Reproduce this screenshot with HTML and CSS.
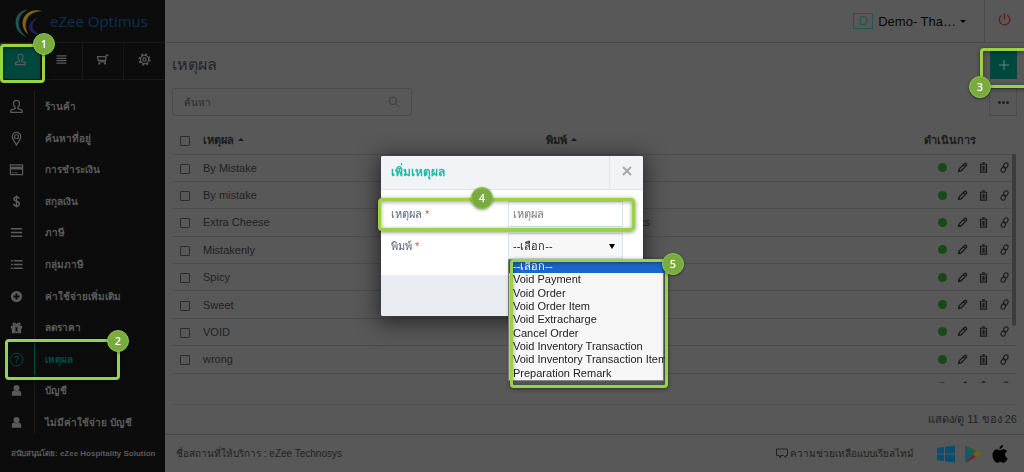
FILE: index.html
```html
<!DOCTYPE html>
<html lang="th">
<head>
    <meta charset="UTF-8">
    <meta name="viewport" content="width=device-width, initial-scale=1.0">
    <title>eZee Optimus - เหตุผล</title>
    <link rel="stylesheet" href="styles.css">
</head>
<body>
    <svg class="sprite" aria-hidden="true">
        <symbol id="i-person" viewBox="0 0 16 16"><path d="M8 1.500C5.800 1.500 4.800 3 4.800 5c0 1.600.7 3 1.700 3.700v1.500L2 12v2.300h12V12l-4.500-1.800V8.700c1-.7 1.700-2.100 1.700-3.700 0-2-1-3.500-3.200-3.500z" fill="none" stroke="currentColor" stroke-width="1.400"/></symbol>
        <symbol id="i-pin" viewBox="0 0 16 16"><path d="M8 15C6 11.500 3.500 9 3.500 6a4.500 4.500 0 0 1 9 0c0 3-2.500 5.500-4.500 9z" fill="none" stroke="currentColor" stroke-width="1.400"/><rect x="6" y="4" width="4" height="4" rx="1" fill="none" stroke="currentColor" stroke-width="1.300"/></symbol>
        <symbol id="i-card" viewBox="0 0 16 16"><path d="M1.500 3h13v10.500h-13z" fill="none" stroke="currentColor" stroke-width="1.300"/><path d="M1.500 5h13v3h-13z" fill="currentColor"/><path d="M3 11.500h2M6 11.500h3" stroke="currentColor"/></symbol>
        <symbol id="i-dollar" viewBox="0 0 16 16"><path d="M10.800 5C10.500 3.800 9.500 3.200 8 3.200S5.300 4 5.300 5.400C5.300 8.500 11 7 11 10.300c0 1.500-1.200 2.500-3 2.500s-2.900-.8-3.100-2.200M8 1.500v13" fill="none" stroke="currentColor" stroke-width="1.600"/></symbol>
        <symbol id="i-lines" viewBox="0 0 16 16"><path d="M2 4h12M2 8h12M2 12h12" stroke="currentColor" stroke-width="1.500"/></symbol>
        <symbol id="i-menu" viewBox="0 0 16 16"><path d="M2 3.500h12M2 6.500h12M2 9.500h12M2 12.500h12" stroke="currentColor" stroke-width="1.500"/></symbol>
        <symbol id="i-list" viewBox="0 0 16 16"><path d="M2 4h2M5 4h9.500M2 8h2M5 8h9.500M2 12h2M5 12h9.500" stroke="currentColor" stroke-width="1.500"/></symbol>
        <symbol id="i-plus-circle" viewBox="0 0 16 16"><circle cx="8" cy="8" r="6" fill="currentColor"/><path d="M8 4.800v6.400M4.800 8h6.400" stroke="#0c0c0c" stroke-width="2"/></symbol>
        <symbol id="i-gift" viewBox="0 0 16 16"><path d="M2 6h5v3H2zM9 6h5v3H9zM3 9h4v5H3zM9 9h4v5H9z" fill="currentColor"/><path d="M8 6C5 6 4 5.300 4.500 4S7.300 3.300 8 6c.7-2.700 3-3.300 3.500-2S11 6 8 6z" fill="none" stroke="currentColor" stroke-width="1.400"/><path d="M7 12h2v2H7z" fill="currentColor"/></symbol>
        <symbol id="i-help" viewBox="0 0 16 16"><circle cx="8" cy="8" r="6.800" fill="none" stroke="currentColor"/><path d="M6 6.500C6 5.200 6.800 4.500 8 4.500s2 .8 2 1.800C10 7.800 8 7.800 8 9.500M8 10.800v1.200" fill="none" stroke="currentColor" stroke-width="1.100"/></symbol>
        <symbol id="i-user" viewBox="0 0 16 16"><circle cx="8" cy="5.300" r="3.200" fill="currentColor"/><path d="M3 13.500V11c0-1.800 1.200-3 2.800-3 1.200 1 3.200 1 4.400 0 1.600 0 2.800 1.200 2.800 3v2.500z" fill="currentColor"/></symbol>
        <symbol id="i-cart" viewBox="0 0 16 16"><path d="M15.500 2.500h-2.800l-1.200 8.500H3M12.300 4.500H2l.8 4.500H12" fill="none" stroke="currentColor" stroke-width="1.600"/><circle cx="4" cy="13" r="1.400" fill="currentColor"/><circle cx="11" cy="13" r="1.400" fill="currentColor"/></symbol>
        <symbol id="i-gear" viewBox="0 0 16 16"><circle cx="8" cy="8" r="6.500" fill="none" stroke="currentColor" stroke-width="2" stroke-dasharray="2.600 2.505"/><circle cx="8" cy="8" r="5" fill="none" stroke="currentColor" stroke-width="1.400"/><circle cx="8" cy="8" r="2" fill="none" stroke="currentColor" stroke-width="1.400"/></symbol>
        <symbol id="i-search" viewBox="0 0 16 16"><circle cx="6.500" cy="6.500" r="5" fill="none" stroke="currentColor" stroke-width="1.200"/><path d="M10.300 10.300L15 15" stroke="currentColor" stroke-width="1.300"/></symbol>
        <symbol id="i-power" viewBox="0 0 16 16"><path d="M5 3.500a5.600 5.600 0 1 0 6 0M8 1v7" fill="none" stroke="currentColor" stroke-width="1.500"/></symbol>
        <symbol id="i-pencil" viewBox="0 0 12 12"><path d="M1.800 10.200l.6-2.800L8 1.900c.6-.6 1.500-.6 2.100 0s.6 1.500 0 2.100L4.500 9.600zM7 2.900L9.100 5" fill="none" stroke="currentColor" stroke-width="1.400"/><path d="M1.200 10.800l.6-3 2.400 2.400z" fill="currentColor"/></symbol>
        <symbol id="i-trash" viewBox="0 0 12 12"><path d="M2 2.500h8M4.500 1h3M2.700 2.500V11h6.600V2.500" fill="none" stroke="currentColor" stroke-width="1.200"/><path d="M4 4h1v5.500H4zM5.500 4h1v5.500h-1zM7 4h1v5.500H7z" fill="currentColor"/></symbol>
        <symbol id="i-link" viewBox="0 0 12 12"><g fill="none" stroke="currentColor" stroke-width="1.200"><rect x="5.200" y="0.800" width="4.400" height="6" rx="2.200" transform="rotate(25 7.400 3.800)"/><rect x="2.600" y="5.200" width="4.400" height="6" rx="2.200" transform="rotate(25 4.800 8.200)"/></g></symbol>
    </svg>

    <div class="app">
        <aside class="sidebar">
            <div class="logo">
                <svg class="logo-mark" viewBox="0 0 30 30" aria-hidden="true">
                    <path d="M14 1C4 2-1 9 1 18c1 5 5 9 12 12C6 25 3 19 4 13 5 7 9 3 14 1z" fill="#245158"/>
                    <path d="M29 3C19-1 9 5 8 13c-1 6 2 11 6 14-3-5-4-10-2-15C14 6 21 2 29 3z" fill="#806410"/>
                    <path d="M25 9c-7 2-11 6-10 12 1 4 5 6 10 5-4-2-7-4-7-8 0-3 3-7 7-9z" fill="#1c2455"/>
                </svg>
                <span>eZee Optimus</span>
            </div>
            <div class="tabs">
                <button class="tab active" aria-label="ร้านค้า"><svg><use href="#i-person"/></svg></button>
                <button class="tab" aria-label="เมนู"><svg><use href="#i-menu"/></svg></button>
                <button class="tab" aria-label="สินค้า"><svg><use href="#i-cart"/></svg></button>
                <button class="tab" aria-label="ตั้งค่า"><svg><use href="#i-gear"/></svg></button>
                <span class="mark mark-tab"><b>1</b></span>
            </div>
            <nav class="menu">
                <ul>
                    <li><a href="#"><svg><use href="#i-person"/></svg><span>ร้านค้า</span></a></li>
                    <li><a href="#"><svg><use href="#i-pin"/></svg><span>ค้นหาที่อยู่</span></a></li>
                    <li><a href="#"><svg><use href="#i-card"/></svg><span>การชำระเงิน</span></a></li>
                    <li><a href="#"><svg><use href="#i-dollar"/></svg><span>สกุลเงิน</span></a></li>
                    <li><a href="#"><svg><use href="#i-lines"/></svg><span>ภาษี</span></a></li>
                    <li><a href="#"><svg><use href="#i-list"/></svg><span>กลุ่มภาษี</span></a></li>
                    <li><a href="#"><svg><use href="#i-plus-circle"/></svg><span>ค่าใช้จ่ายเพิ่มเติม</span></a></li>
                    <li><a href="#"><svg><use href="#i-gift"/></svg><span>ลดราคา</span></a></li>
                    <li class="current"><a href="#"><svg><use href="#i-help"/></svg><span>เหตุผล</span></a><span class="mark mark-menu"><b>2</b></span></li>
                    <li><a href="#"><svg><use href="#i-user"/></svg><span>บัญชี</span></a></li>
                    <li><a href="#"><svg><use href="#i-user"/></svg><span>ไม่มีค่าใช้จ่าย บัญชี</span></a></li>
                </ul>
            </nav>
            <div class="powered">สนับสนุนโดย: eZee Hospitality Solution</div>
        </aside>

        <div class="page">
            <header class="topbar">
                <button class="account"><span class="initial">D</span>Demo- Tha…<i class="caret-down"></i></button>
                <button class="power" aria-label="ออกจากระบบ"><svg><use href="#i-power"/></svg></button>
            </header>

            <main class="content">
                <div class="row title-row">
                    <h1>เหตุผล</h1>
                    <div class="add-wrap">
                        <button class="add" aria-label="เพิ่ม"><svg viewBox="0 0 12 12"><path d="M6 1v10M1 6h10" stroke="currentColor"/></svg></button>
                        <span class="mark mark-add"><b>3</b></span>
                    </div>
                </div>
                <div class="row">
                    <label class="search">
                        <input type="text" placeholder="ค้นหา" aria-label="ค้นหา">
                        <svg><use href="#i-search"/></svg>
                    </label>
                    <button class="more" aria-label="เพิ่มเติม"><i></i><i></i><i></i></button>
                </div>
                <div class="table-wrap">
                    <table>
                        <thead>
                            <tr>
                                <th class="check"><input type="checkbox" aria-label="เลือกทั้งหมด"></th>
                                <th class="name">เหตุผล <i class="caret-up"></i></th>
                                <th>พิมพ์ <i class="caret-up"></i></th>
                                <th class="actions">ดำเนินการ</th>
                            </tr>
                        </thead>
                        <tbody id="rows"></tbody>
                    </table>
                    <span class="scroll-thumb"></span>
                </div>
                <div class="count">แสดง/ดู 11 ของ 26</div>
            </main>

            <footer class="bottom">
                <span>ชื่อสถานที่ให้บริการ : eZee Technosys</span>
                <div class="support">
                    <a href="#"><svg class="chat" viewBox="0 0 12 12"><path d="M3 1h8.500v6.500H10V10L7.500 7.500M3 1H.5v6.500H3L4.500 10V7.500h3" fill="none" stroke="currentColor"/></svg>ความช่วยเหลือแบบเรียลไทม์</a>
                    <svg class="store" viewBox="0 0 18 18"><path d="M0 3l7-1v6.500H0zM8 1.800L18 .5v8H8zM0 9.500h7V16l-7-1zM8 9.500h10v8L8 16.200z" fill="#064f70"/></svg>
                    <svg class="store" viewBox="0 0 18 18"><path d="M1 0v18l8-9z" fill="#145a66"/><path d="M1 0l8 9 3-3z" fill="#17603c"/><path d="M1 18l8-9 3 3z" fill="#6b2430"/><path d="M12 6l6 3-6 3-3-3z" fill="#756010"/></svg>
                    <svg class="store" viewBox="0 0 18 18"><path d="M12 0c.2 2-1.500 4-3.500 4C8.300 2 10 .3 12 0zM9 5.200c1 0 2-.9 3.700-.9 1.400 0 2.700.7 3.500 1.800-3.200 1.900-2.600 6 .5 7.200-.8 2.200-2.400 4.500-4 4.500-1.300 0-1.800-.8-3.300-.8s-2.100.8-3.300.8C4 17.800 1.500 13.500 1.500 10c0-3.500 2.200-5.500 4.500-5.500 1.300 0 2.200.7 3 .7z" fill="#000"/></svg>
                </div>
            </footer>
        </div>
    </div>

    <div class="backdrop">
        <form class="modal">
            <div class="modal-head">
                <h2>เพิ่มเหตุผล</h2>
                <button type="button" class="close" aria-label="ปิด"><svg viewBox="0 0 10 10"><path d="M1 1l8 8M9 1l-8 8" stroke="currentColor" stroke-width="2"/></svg></button>
            </div>
            <div class="modal-body">
                <div class="field">
                    <label for="reason">เหตุผล <em>*</em></label>
                    <input id="reason" type="text" placeholder="เหตุผล">
                    <span class="mark mark-field"><b>4</b></span>
                </div>
                <div class="field">
                    <label for="type">พิมพ์ <em>*</em></label>
                    <div class="select-wrap">
                        <select id="type"><option>--เลือก--</option></select>
                        <ul class="options">
                            <li class="selected">--เลือก--</li>
                            <li>Void Payment</li>
                            <li>Void Order</li>
                            <li>Void Order Item</li>
                            <li>Void Extracharge</li>
                            <li>Cancel Order</li>
                            <li>Void Inventory Transaction</li>
                            <li>Void Inventory Transaction Item</li>
                            <li>Preparation Remark</li>
                        </ul>
                        <span class="mark mark-options"><b>5</b></span>
                    </div>
                </div>
            </div>
            <div class="modal-foot"></div>
        </form>
    </div>

    <script>
        const reasons = [
            ["By Mistake", ""],
            ["By mistake", ""],
            ["Extra Cheese", "Preparation Remarks"],
            ["Mistakenly", ""],
            ["Spicy", ""],
            ["Sweet", ""],
            ["VOID", ""],
            ["wrong", ""],
            ["", ""]
        ];

        document.getElementById("rows").innerHTML = reasons.map(([name, type]) => `
            <tr>
                <td class="check"><input type="checkbox" aria-label="${name}"></td>
                <td>${name}</td>
                <td>${type}</td>
                <td class="actions"><div class="tools">
                    <i class="status"></i>
                    <button aria-label="แก้ไข"><svg><use href="#i-pencil"/></svg></button>
                    <button aria-label="ลบ"><svg><use href="#i-trash"/></svg></button>
                    <button aria-label="ลิงก์"><svg><use href="#i-link"/></svg></button>
                </div></td>
            </tr>`).join("");
    </script>
</body>
</html>
```
FILE: styles.css
```css
* {
    box-sizing: border-box;
}

body {
    margin: 0;
    font-family: "Liberation Sans", Arial, sans-serif;
    font-size: 11px;
    color: #222;
    background: #585858;
    overflow: hidden;
}

button {
    padding: 0;
    border: none;
    background: none;
    font: inherit;
    color: inherit;
    cursor: pointer;
}

a {
    color: inherit;
    text-decoration: none;
}

ul {
    margin: 0;
    padding: 0;
    list-style: none;
}

svg {
    display: block;
    flex: none;
}

.sprite {
    position: absolute;
    width: 0;
    height: 0;
}

.app {
    display: flex;
    height: 100vh;
}

/* sidebar */
.sidebar {
    display: flex;
    flex-direction: column;
    width: 165px;
    flex: none;
    background: #0c0c0c;
    color: #5a5a5a;
}

.logo {
    display: flex;
    align-items: center;
    gap: 6px;
    height: 42px;
    padding-left: 15px;
    font-family: "Open Sans", sans-serif;
    font-size: 15px;
    color: #0d3054;
}

.logo-mark {
    width: 29px;
    height: 30px;
    margin-top: 3px;
}

.tabs {
    position: relative;
    display: grid;
    grid-template-columns: repeat(4, 1fr);
    height: 38px;
    border-top: 1px solid #181818;
    border-bottom: 1px solid #181818;
}

.tab {
    display: flex;
    align-items: center;
    justify-content: center;
    padding-bottom: 3px;
    border-right: 1px solid #181818;
}

.tab:nth-child(4) {
    border-right: none;
}

.tab svg {
    width: 13px;
    height: 13px;
}

.tab.active {
    background: #00473d;
}

.menu {
    flex: 1;
    min-height: 0;
    padding-top: 11px;
}

.menu ul {
    display: flex;
    flex-direction: column;
    height: calc(100% + 4px);
}

.menu li {
    position: relative;
    flex: 1;
}

.menu a {
    display: flex;
    align-items: stretch;
    height: 100%;
    font-weight: bold;
    font-size: 10px;
}

.menu svg {
    width: 15px;
    height: 15px;
    margin: 0 10px 0 9px;
    align-self: center;
}

.menu a span {
    display: flex;
    align-items: center;
    flex: 1;
    padding-left: 10px;
    border-left: 1px solid #1c1c1c;
}

.menu .current a {
    color: #004a40;
}

.menu .current a span {
    border-left-color: #004a40;
}

.powered {
    position: relative;
    display: flex;
    align-items: center;
    height: 38px;
    padding-left: 11px;
    background: #0c0c0c;
    font-size: 8px;
    font-weight: bold;
    white-space: nowrap;
}

/* page */
.page {
    display: flex;
    flex-direction: column;
    flex: 1;
    min-width: 0;
}

.topbar {
    display: flex;
    justify-content: flex-end;
    height: 43px;
    border-bottom: 1px solid #4a4a4a;
}

.account {
    display: flex;
    align-items: center;
    padding-right: 18px;
    font-size: 13px;
    color: #080808;
}

.initial {
    width: 20px;
    margin-right: 5px;
    border: 1px solid #20574f;
    line-height: 14px;
    color: #20574f;
}

.caret-down {
    margin-left: 4px;
    border: 3px solid transparent;
    border-top-color: #080808;
    border-bottom: none;
}

.power {
    display: flex;
    align-items: center;
    justify-content: center;
    width: 40px;
    padding-bottom: 3px;
    border-left: 1px solid #4a4a4a;
    color: #6a1a1a;
}

.power svg {
    width: 15px;
    height: 15px;
}

.content {
    display: flex;
    flex-direction: column;
    flex: 1;
    min-height: 0;
    padding: 7px 7px 0;
}

.row {
    display: flex;
    justify-content: space-between;
}

.title-row {
    height: 38px;
}

h1 {
    margin: 0;
    font-size: 16px;
    font-weight: normal;
    line-height: 30px;
    color: #20252c;
}

.add-wrap {
    position: relative;
}

.add {
    display: flex;
    align-items: center;
    justify-content: center;
    width: 27px;
    height: 29px;
    background: #00473d;
    color: #5c8a84;
}

.add svg {
    width: 12px;
    height: 12px;
}

.search {
    display: flex;
    align-items: center;
    width: 240px;
    height: 28px;
    padding: 0 11px;
    border: 1px solid #4c4c4c;
    border-radius: 2px;
    color: #383838;
    font-size: 10px;
}

.search input {
    flex: 1;
    min-width: 0;
    padding: 0;
    border: none;
    outline: none;
    background: none;
    font: inherit;
}

.search input::placeholder {
    color: #2c2c2c;
}

.search svg {
    width: 12px;
    height: 12px;
}

.more {
    display: flex;
    align-items: center;
    justify-content: center;
    gap: 1px;
    width: 28px;
    height: 28px;
    border: 1px solid #4c4c4c;
}

.more i {
    width: 3px;
    height: 3px;
    border-radius: 50%;
    background: #1c2026;
}

.table-wrap {
    position: relative;
    flex: 1;
    min-height: 0;
    margin-top: 11px;
    overflow: hidden;
}

table {
    width: 100%;
    height: 274px;
    border-collapse: collapse;
    table-layout: fixed;
}

th,
td {
    height: 27px;
    padding: 0;
    border-bottom: 1px solid #4c4c4c;
    line-height: 14px;
    text-align: left;
    white-space: nowrap;
}

th {
    color: #1c1c1c;
}

.check {
    width: 31px;
    padding-left: 8px;
}

.check input {
    appearance: none;
    display: block;
    width: 10px;
    height: 10px;
    margin: 2px 0 0;
    border: 1px solid #2c2c2c;
    border-radius: 1px;
}

.name {
    width: 343px;
}

.actions {
    width: 93px;
}

.caret-up {
    display: inline-block;
    margin-left: 1px;
    border: 3px solid transparent;
    border-bottom-color: #1c1c1c;
    border-top: none;
    vertical-align: 3px;
}

.tools {
    display: flex;
    align-items: center;
    gap: 10px;
    margin-left: 14px;
    color: #1a1a1a;
}

.tools svg {
    width: 11px;
    height: 11px;
}

.status {
    width: 9px;
    height: 9px;
    border-radius: 50%;
    background: #184a18;
}

.scroll-thumb {
    position: absolute;
    top: 27px;
    right: 1px;
    width: 4px;
    height: 172px;
    border-radius: 2px;
    background: #3c3c3c;
}

.count {
    height: 30px;
    margin-top: 21px;
    border-top: 1px solid #4f4f4f;
    line-height: 28px;
    text-align: right;
}

.bottom {
    display: flex;
    align-items: center;
    justify-content: space-between;
    height: 38px;
    padding: 0 15px 0 11px;
    border-top: 1px solid #4a4a4a;
    font-size: 10px;
}

.support,
.support a {
    display: flex;
    align-items: center;
}

.support {
    gap: 9px;
}

.support a {
    gap: 2px;
    margin-right: 14px;
}

.chat {
    width: 12px;
    height: 12px;
}

.store {
    width: 18px;
    height: 18px;
}

/* modal */
.backdrop {
    position: fixed;
    inset: 0;
    display: flex;
    align-items: center;
    justify-content: center;
}

.modal {
    width: 262px;
    border-radius: 2px;
    background: #fff;
    box-shadow: 0 4px 20px 4px rgba(0, 0, 0, 0.5);
    color: #5a6578;
}

.modal-head {
    display: flex;
    height: 34px;
    border-bottom: 1px solid #dfe4ec;
    border-radius: 2px 2px 0 0;
    background: #f1f3f7;
}

h2 {
    flex: 1;
    margin: 0;
    padding-left: 10px;
    font-size: 12px;
    line-height: 32px;
    color: #1fbba6;
}

.close {
    display: flex;
    align-items: center;
    justify-content: center;
    width: 34px;
    padding-bottom: 4px;
    border-left: 1px solid #dfe4ec;
    color: #a8a8a8;
}

.close svg {
    width: 10px;
    height: 10px;
}

.modal-body {
    display: flex;
    flex-direction: column;
    gap: 6px;
    padding: 11px 20px 16px 10px;
}

.field {
    position: relative;
    display: grid;
    grid-template-columns: 1fr 115px;
    align-items: center;
}

.field em {
    color: #f44;
    font-style: normal;
}

.field input,
.field select {
    display: block;
    width: 100%;
    height: 26px;
    padding: 0 4px;
    border: 1px solid #dde3ea;
    border-radius: 1px;
    outline: none;
    background: #fff;
    color: #222;
    font: inherit;
}

.field input::placeholder {
    color: #777;
}

.field select {
    appearance: none;
    background: #f7f7f7;
}

.select-wrap {
    position: relative;
}

.select-wrap::after {
    content: "";
    position: absolute;
    top: 11px;
    right: 8px;
    border: 3px solid transparent;
    border-top: 5px solid #000;
    border-bottom: none;
}

.options {
    position: absolute;
    top: 100%;
    left: 0;
    display: grid;
    grid-auto-rows: 1fr;
    width: 156px;
    height: 122px;
    border: 1px solid #888;
    background: #f7f7f7;
    color: #222;
}

.options li {
    min-height: 0;
    padding-left: 4px;
    line-height: 13px;
    white-space: nowrap;
}

.options .selected {
    background: #1b66cc;
    color: #fff;
    overflow: hidden;
}

.modal-foot {
    height: 41px;
    border-radius: 0 0 2px 2px;
    background: #e9edf1;
}

/* numbered step markers */
.mark {
    position: absolute;
    z-index: 2;
    border: 3px solid #96d445;
    border-radius: 4px;
    box-shadow: 0 1px 4px rgba(0, 0, 0, 0.5), inset 0 1px 4px rgba(0, 0, 0, 0.4);
    pointer-events: none;
}

.mark b {
    position: absolute;
    width: 22px;
    height: 22px;
    border: 1px solid #8cc840;
    border-radius: 50%;
    background: #7aab40;
    box-shadow: 0 1px 3px rgba(0, 0, 0, 0.4);
    font-family: "Open Sans", sans-serif;
    font-size: 11px;
    font-weight: 600;
    line-height: 20px;
    text-align: center;
    color: #fff;
}

.mark-tab {
    top: 1px;
    left: 0;
    width: 45px;
    height: 39px;
}

.mark-tab b {
    top: -14px;
    right: -13px;
}

.mark-menu {
    top: -4px;
    left: 5px;
    width: 115px;
    height: 41px;
}

.mark-menu b {
    top: -12px;
    right: -12px;
}

.mark-add {
    top: -2px;
    left: -10px;
    width: 60px;
    height: 40px;
}

.mark-add b {
    top: 25px;
    left: -14px;
}

.mark-field {
    top: -3px;
    left: -13px;
    width: 257px;
    height: 33px;
}

.mark-field b {
    top: -14px;
    left: 90px;
}

.mark-options {
    top: 26px;
    left: 2px;
    width: 158px;
    height: 129px;
}

.mark-options b {
    top: -9px;
    right: -19px;
}
```
